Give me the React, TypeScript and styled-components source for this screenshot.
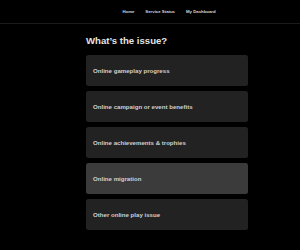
import React from 'react';
import styled, { createGlobalStyle } from 'styled-components';

const GlobalStyle = createGlobalStyle`
  html, body {
    margin: 0;
    padding: 0;
    background: #000;
  }
  body {
    font-family: "Liberation Sans", Arial, sans-serif;
    color: #e6e6e6;
  }
`;

const Header = styled.header`
  height: 23px;
  border-bottom: 1px solid #1b1b1b;
  display: flex;
`;

const Column = styled.div`
  width: 162px;
  margin-left: 86px;
`;

const Nav = styled(Column)`
  display: flex;
  align-items: center;
  justify-content: center;
  gap: 11px;
  padding-left: 2px;
`;

const NavLink = styled.a`
  font-size: 4.3px;
  font-weight: 700;
  color: #d8d8d8;
  text-decoration: none;
  white-space: nowrap;
`;

const Title = styled.h1`
  margin: 0;
  padding-top: 11px;
  height: 20px;
  font-size: 9.6px;
  line-height: 11px;
  font-weight: 700;
  color: #e4e4e4;
`;

const Options = styled.div`
  display: flex;
  flex-direction: column;
  gap: 5px;
`;

const Option = styled.button<{ $active?: boolean }>`
  all: unset;
  box-sizing: border-box;
  height: 31px;
  display: flex;
  align-items: center;
  padding: 0 7px;
  border-radius: 2.5px;
  background: ${p => (p.$active ? '#3b3b3b' : '#222222')};
  font-family: "Liberation Sans", Arial, sans-serif;
  font-size: 6.1px;
  font-weight: 700;
  color: #d0d0d0;
  cursor: pointer;
`;

const issues = [
  'Online gameplay progress',
  'Online campaign or event benefits',
  'Online achievements & trophies',
  'Online migration',
  'Other online play issue',
];

export default function App() {
  return (
    <>
      <GlobalStyle />
      <Header>
        <Nav>
          <NavLink href="#">Home</NavLink>
          <NavLink href="#">Service Status</NavLink>
          <NavLink href="#">My Dashboard</NavLink>
        </Nav>
      </Header>
      <Column>
        <Title>What’s the issue?</Title>
        <Options>
          {issues.map((issue, i) => (
            <Option key={issue} $active={i === 3}>
              {issue}
            </Option>
          ))}
        </Options>
      </Column>
    </>
  );
}
